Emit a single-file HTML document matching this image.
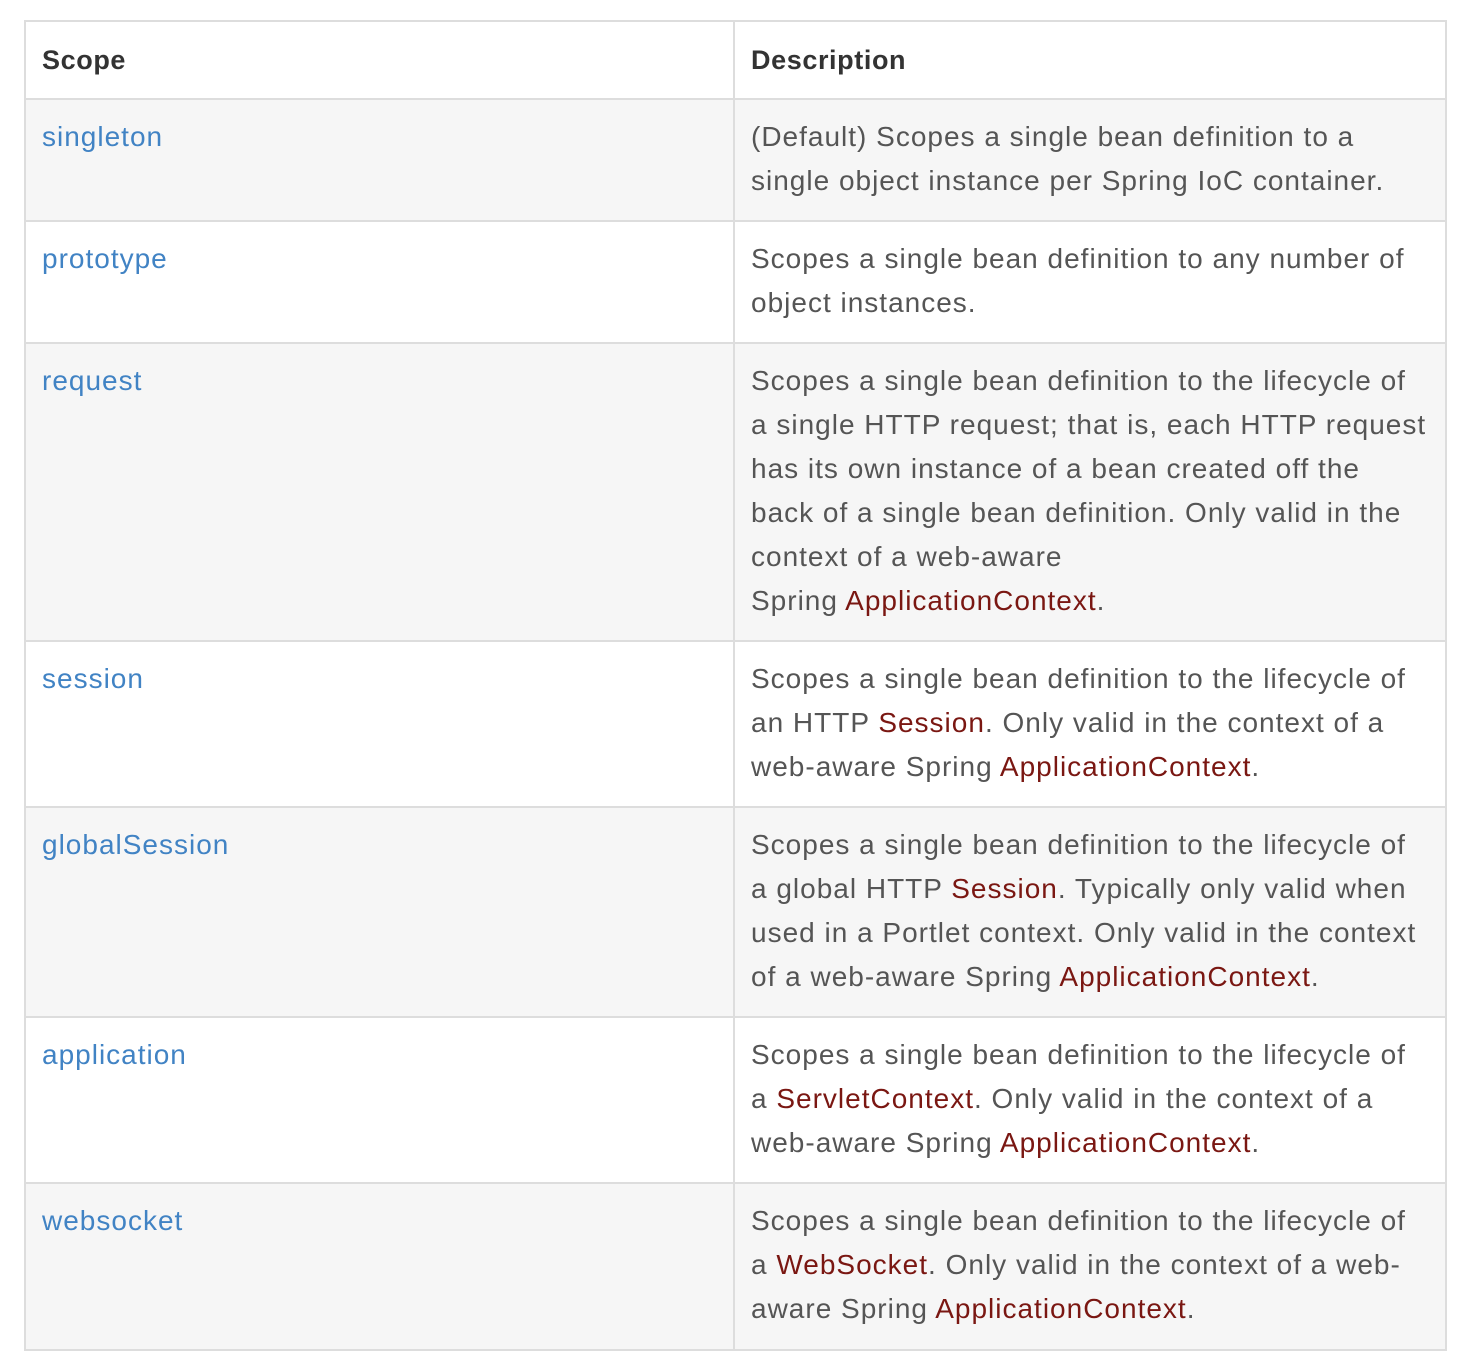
<!DOCTYPE html>
<html><head><meta charset="utf-8"><style>
body{margin:0;background:#fff;width:1478px;height:1362px;overflow:hidden;font-family:"Liberation Sans",sans-serif;}
.t{position:absolute;left:24px;top:20px;width:1423px;border:2px solid #ddd;box-sizing:border-box;}
.r{display:flex;border-top:2px solid #ddd;box-sizing:border-box;}
.r:first-child{border-top:none}
.r.g{background:#f6f6f6}
.c1{width:709px;border-right:2px solid #ddd;padding:15px 16px;box-sizing:border-box;}
.c2{flex:1;padding:15px 16px;box-sizing:border-box;}
.c1,.c2{font-size:28px;letter-spacing:1px;line-height:44px;color:#555;white-space:nowrap}
.c1{color:#4183c4}
.h .c1,.h .c2{color:#333;font-weight:bold;font-size:27px;letter-spacing:0.6px;padding-top:16px}
.x{color:#7a1712}
</style></head><body>
<div class="t">
<div class="r h" style="height:76px"><div class="c1">Scope</div><div class="c2">Description</div></div>
<div class="r g" style="height:122px"><div class="c1">singleton</div><div class="c2">(Default) Scopes a single bean definition to a<br>single object instance per Spring IoC container.</div></div>
<div class="r" style="height:122px"><div class="c1">prototype</div><div class="c2">Scopes a single bean definition to any number of<br>object instances.</div></div>
<div class="r g" style="height:298px"><div class="c1">request</div><div class="c2">Scopes a single bean definition to the lifecycle of<br>a single HTTP request; that is, each HTTP request<br>has its own instance of a bean created off the<br>back of a single bean definition. Only valid in the<br>context of a web-aware<br>Spring <span class="x">ApplicationContext</span>.</div></div>
<div class="r" style="height:166px"><div class="c1">session</div><div class="c2">Scopes a single bean definition to the lifecycle of<br>an HTTP <span class="x">Session</span>. Only valid in the context of a<br>web-aware Spring <span class="x">ApplicationContext</span>.</div></div>
<div class="r g" style="height:210px"><div class="c1">globalSession</div><div class="c2">Scopes a single bean definition to the lifecycle of<br>a global HTTP <span class="x">Session</span>. Typically only valid when<br>used in a Portlet context. Only valid in the context<br>of a web-aware Spring <span class="x">ApplicationContext</span>.</div></div>
<div class="r" style="height:166px"><div class="c1">application</div><div class="c2">Scopes a single bean definition to the lifecycle of<br>a <span class="x">ServletContext</span>. Only valid in the context of a<br>web-aware Spring <span class="x">ApplicationContext</span>.</div></div>
<div class="r g" style="height:167px"><div class="c1">websocket</div><div class="c2">Scopes a single bean definition to the lifecycle of<br>a <span class="x">WebSocket</span>. Only valid in the context of a web-<br>aware Spring <span class="x">ApplicationContext</span>.</div></div>
</div>
</body></html>
